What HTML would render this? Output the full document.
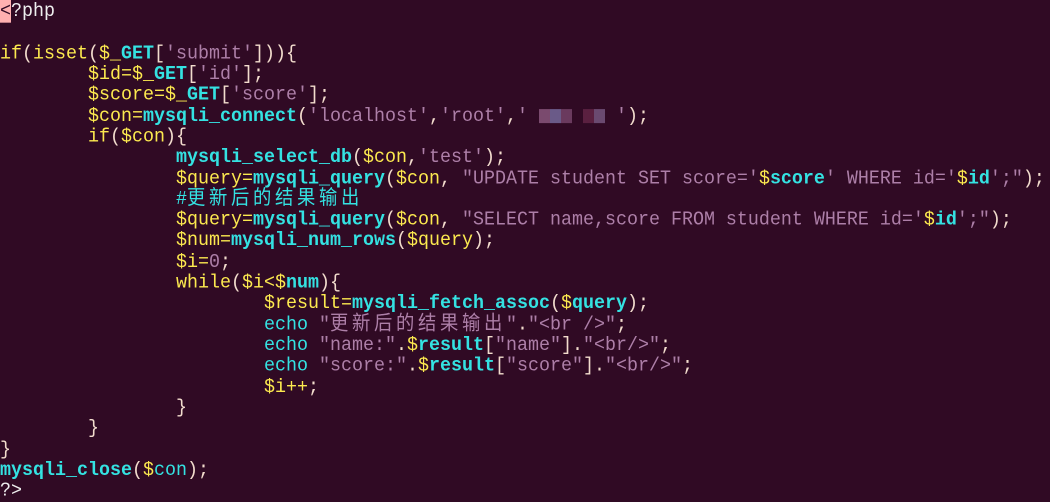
<!DOCTYPE html>
<html><head><meta charset="utf-8"><style>
body{margin:0;background:#300a24;width:1050px;height:502px;overflow:hidden}
pre{margin:0;padding-top:1px;font-family:"Liberation Mono","Noto Sans CJK SC",monospace;font-size:18.33px;line-height:19.32px;color:#f2dccd;white-space:pre;transform:scaleY(1.08);transform-origin:0 0}
.y{color:#fce94f}.c{color:#34e2e2;font-weight:bold}.e{color:#34e2e2}.s{color:#ad7fa8}.w{color:#eee}
.z{letter-spacing:3.67px}
.cur{background:#ffb0b0;color:#300a24}
.m{display:inline-block;width:11px;height:13px;vertical-align:-2px}
</style></head><body><pre><span class="cur">&lt;</span><span class="w">?php</span>

<span class="y">if</span>(<span class="y">isset</span>(<span class="y">$_</span><span class="c">GET</span>[<span class="s">'submit'</span>])){
        <span class="y">$id=$_</span><span class="c">GET</span>[<span class="s">'id'</span>];
        <span class="y">$score=$_</span><span class="c">GET</span>[<span class="s">'score'</span>];
        <span class="y">$con=</span><span class="c">mysqli_connect</span>(<span class="s">'localhost'</span>,<span class="s">'root'</span>,<span class="s">' <span class="m" style="background:#7a4a6e"></span><span class="m" style="background:#6a5a88"></span><span class="m" style="background:#6a3a5e"></span> <span class="m" style="background:#5a2040"></span><span class="m" style="background:#6a4a70"></span> '</span>);
        <span class="y">if</span>(<span class="y">$con</span>){
                <span class="c">mysqli_select_db</span>(<span class="y">$con</span>,<span class="s">'test'</span>);
                <span class="y">$query=</span><span class="c">mysqli_query</span>(<span class="y">$con</span>, <span class="s">"UPDATE student SET score='<span class="y">$</span><span class="c">score</span>' WHERE id='<span class="y">$</span><span class="c">id</span>';"</span>);
                <span class="e">#<span class="z">更新后的结果输出</span></span>
                <span class="y">$query=</span><span class="c">mysqli_query</span>(<span class="y">$con</span>, <span class="s">"SELECT name,score FROM student WHERE id='<span class="y">$</span><span class="c">id</span>';"</span>);
                <span class="y">$num=</span><span class="c">mysqli_num_rows</span>(<span class="y">$query</span>);
                <span class="y">$i=</span><span class="s">0</span>;
                <span class="y">while</span>(<span class="y">$i&lt;$</span><span class="c">num</span>){
                        <span class="y">$result=</span><span class="c">mysqli_fetch_assoc</span>(<span class="y">$</span><span class="c">query</span>);
                        <span class="e">echo</span> <span class="s">"<span class="z">更新后的结果输出</span>"</span>.<span class="s">"&lt;br /&gt;"</span>;
                        <span class="e">echo</span> <span class="s">"name:"</span>.<span class="y">$</span><span class="c">result</span>[<span class="s">"name"</span>].<span class="s">"&lt;br/&gt;"</span>;
                        <span class="e">echo</span> <span class="s">"score:"</span>.<span class="y">$</span><span class="c">result</span>[<span class="s">"score"</span>].<span class="s">"&lt;br/&gt;"</span>;
                        <span class="y">$i++</span>;
                }
        }
}
<span class="c">mysqli_close</span>(<span class="y">$</span><span class="e">con</span>);
<span class="w">?&gt;</span></pre></body></html>
